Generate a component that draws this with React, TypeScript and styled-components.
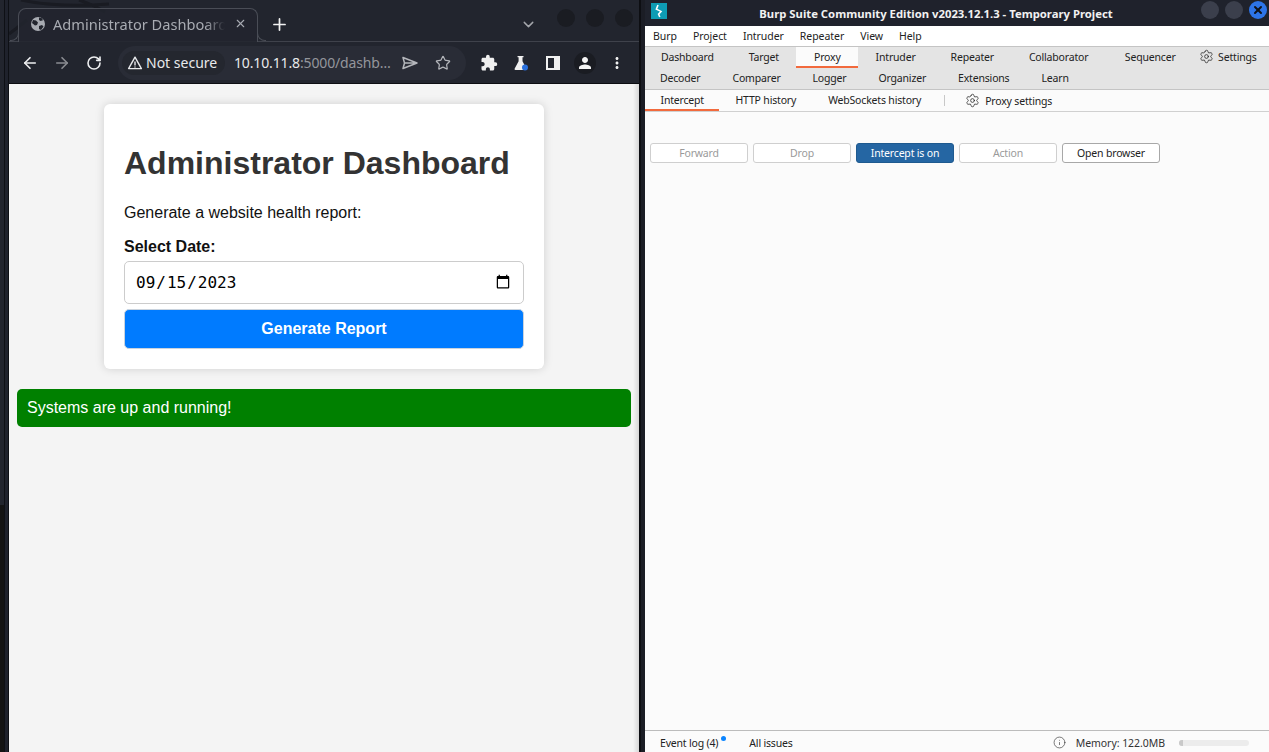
import React from "react";
import styled, { createGlobalStyle } from "styled-components";
import { ArrowLeft, ArrowRight, ChevronDown, Info, Plus, RotateCw, Settings, Star, X } from "lucide-react";
import { MdExtension, MdMoreVert, MdPerson } from "react-icons/md";

const Global = createGlobalStyle`
  html, body { margin: 0; padding: 0; background: #14161c; overflow: hidden; }
  #root { width: 1269px; height: 752px; }
  * { box-sizing: border-box; }
`;

const Desktop = styled.div`
  width: 1269px; height: 752px; display: flex; background: #14161c; overflow: hidden;
`;
const DesktopEdge = styled.div`
  width: 9px; flex: none;
  background:
    linear-gradient(to right, transparent 4px, #0e1015 4px, #0e1015 5px, #1f222c 5px, #1f222c 8px, #0e1015 8px),
    linear-gradient(to bottom, #22252e 505px, #141414 505px);
`;
const WindowGap = styled.div`
  width: 6px; flex: none; background: linear-gradient(to right, #0d0e12 2px, #1b1d25 2px);
`;
const BrowserWindow = styled.div`
  width: 630px; display: flex; flex-direction: column; flex: none;
  font-family: "Noto Sans", sans-serif;
`;
const TabStrip = styled.div`
  height: 41px; background: #22252e; display: flex; align-items: flex-end; padding-left: 9px; position: relative; flex: none;
`;
const Wallpaper = styled.svg`
  position: absolute; left: 0; top: 0; width: 120px; height: 41px;
`;
const Tab = styled.div`
  width: 240px; height: 34px; margin-bottom: -1px; border: 1px solid #4a4d56; border-bottom: none; border-radius: 8px 8px 0 0;
  background: rgba(34, 37, 46, 0.85); display: flex; align-items: center; padding: 0 10px 4px 11px; color: #a8abb2; font-size: 14.6px;
  position: relative; z-index: 1;
  &::after {
    content: ""; position: absolute; right: -9px; bottom: 1px; width: 8px; height: 8px;
    border-left: 1px solid #4a4d56; border-bottom: 1px solid #4a4d56; border-bottom-left-radius: 8px;
  }
  &::before {
    content: ""; position: absolute; left: -9px; bottom: 1px; width: 8px; height: 8px;
    border-right: 1px solid #4a4d56; border-bottom: 1px solid #4a4d56; border-bottom-right-radius: 8px;
  }
`;
const TabTitle = styled.span`
  flex: 1; margin-left: 7px; white-space: nowrap; overflow: hidden;
  mask-image: linear-gradient(to right, #000 84%, transparent 95%);
`;
const NewTab = styled.div`
  margin: 0 0 7px 12px; height: 20px; display: flex; align-items: center; color: #f2f2f2;
`;
const TabList = styled.div`
  margin: 0 0 7px 231px; display: flex; align-items: center; color: #a3a5aa; height: 20px;
`;
const ControlGroup = styled.div`
  display: flex; gap: 11px; position: absolute; right: 6px; top: 9px;
`;
const WinDot = styled.span<{ $bg: string }>`
  width: 18px; height: 18px; border-radius: 50%; background: ${(p) => p.$bg}; display: flex; align-items: center; justify-content: center;
  color: #10131a;
`;
const Toolbar = styled.div`
  height: 43px; background: #22252e; border-top: 1px solid #3f424b; border-bottom: 1px solid #0c0d11;
  display: flex; align-items: center; flex: none; position: relative;
`;
const NavIcon = styled.span<{ $dim?: boolean }>`
  width: 32px; display: flex; align-items: center; justify-content: center; color: ${(p) => (p.$dim ? "#8a8c92" : "#eeeff1")}; flex: none;
`;
const NavGroup = styled.div`
  display: flex; margin-left: 5px; flex: none;
`;
const Omnibox = styled.div`
  width: 348px; height: 34px; border-radius: 17px; background: #292c36; margin-left: 8px; display: flex; align-items: center; padding-left: 4px; flex: none;
`;
const SecurityChip = styled.div`
  width: 103px; height: 24px; border-radius: 12px; background: #24272f; display: flex; align-items: center; padding-left: 5px; gap: 3px;
  color: #e8e9eb; font-size: 14px; white-space: nowrap;
`;
const UrlText = styled.div`
  margin-left: 9px; font-size: 14px; letter-spacing: -0.14px; color: #e8e9eb; white-space: nowrap; width: 160px;
  span { color: #94969c; }
`;
const OmniIcon = styled.span<{ $ml: number }>`
  margin-left: ${(p) => p.$ml}px; display: flex; color: #b4b6bb;
`;
const ExtGroup = styled.div`
  display: flex; align-items: center; margin-left: 7px; flex: none;
`;
const ExtIcon = styled.span`
  width: 32px; display: flex; align-items: center; justify-content: center; color: #f0f0f0; flex: none;
`;
const Avatar = styled.span`
  width: 22px; height: 22px; margin: 0 5px; border-radius: 50%; background: #1a1c22; display: flex; align-items: center; justify-content: center; color: #f4f4f4; flex: none;
`;
const Page = styled.div`
  flex: 1; background: #f4f4f4; padding: 20px 8px 0; display: flex; flex-direction: column; align-items: center; position: relative;
  font-family: "Liberation Sans", Arial, sans-serif; color: #111;
  &::after {
    content: ""; position: absolute; right: 0; top: 0; bottom: 0; width: 6px;
    background: linear-gradient(to right, transparent, rgba(0, 0, 0, 0.12));
  }
`;
const Card = styled.div`
  width: 440px; height: 265px; background: #fff; border-radius: 6px; padding: 20px; box-shadow: 0 0 10px rgba(0, 0, 0, 0.15);
`;
const Heading = styled.h1`
  font-size: 32px; font-weight: 700; color: #333; margin: 21.44px 0; line-height: 37px;
`;
const Lead = styled.p`
  font-size: 16px; margin: 0 0 16px; line-height: 18px;
`;
const FieldLabel = styled.label`
  display: block; font-size: 16px; font-weight: 700; line-height: 18px; margin-bottom: 5px;
`;
const DateField = styled.input`
  display: block; width: 100%; height: 43px; padding: 10px; border: 1px solid #ccc; border-radius: 5px; background: #fff; color: #000;
  font-size: 16px; font-family: "DejaVu Sans Mono", monospace;
`;
const Submit = styled.button`
  display: block; width: 100%; height: 40px; margin-top: 5px; background: #007bff; color: #fff; border: 1px solid #c9d3de; border-radius: 5px;
  font: 700 16px "Liberation Sans", Arial, sans-serif;
`;
const Alert = styled.div`
  width: 614px; height: 38px; margin-top: 20px; background: #008000; color: #fff; border-radius: 5px; padding: 10px; font-size: 16px; line-height: 18px;
`;

const BurpWindow = styled.div`
  width: 624px; display: flex; flex-direction: column; flex: none; background: #fbfbfb;
  font-family: "Noto Sans", sans-serif; color: #222; font-size: 10.5px; letter-spacing: -0.18px;
`;
const TitleBar = styled.div`
  height: 26px; background: #1f222c; color: #f1f1f1; display: flex; align-items: center; position: relative; justify-content: center; flex: none;
  font-weight: 700; font-size: 11.3px; letter-spacing: 0; padding-right: 42px;
`;
const Logo = styled.span`
  position: absolute; left: 6px; top: 3px; width: 16px; height: 16px; background: #0e9cb4; display: flex; align-items: center; justify-content: center;
`;
const BurpControls = styled.div`
  position: absolute; right: 2px; top: 1px; display: flex; gap: 6px;
`;
const MenuBar = styled.div`
  height: 21px; background: #fff; border-bottom: 1px solid #c4c4c4; display: flex; align-items: center; padding-left: 8px; gap: 16px; flex: none;
  letter-spacing: -0.05px;
`;
const TabBlock = styled.div`
  background: #e4e4e4; border-bottom: 1px solid #c4c4c4; flex: none; height: 43px; overflow: hidden;
`;
const TabRow = styled.div<{ $shift: number }>`
  height: 21px; display: flex; margin-left: ${(p) => p.$shift}px;
`;
const MainTab = styled.div<{ $px: number; $mr?: number; $active?: boolean }>`
  padding: 0 ${(p) => p.$px}px; margin-right: ${(p) => p.$mr ?? 0}px; display: flex; align-items: center; gap: 4px; white-space: nowrap; height: 21px; flex: none;
  background: ${(p) => (p.$active ? "#fbfbfb" : "transparent")};
  border-bottom: 2px solid ${(p) => (p.$active ? "#f26a3d" : "transparent")};
`;
const SubTabs = styled.div`
  height: 22px; background: #fbfbfb; border-bottom: 1px solid #d0d0d0; display: flex; align-items: stretch; flex: none;
`;
const SubTab = styled.div<{ $active?: boolean; $px?: number }>`
  padding: 0 ${(p) => p.$px ?? 16}px; display: flex; align-items: center; white-space: nowrap;
  border-bottom: 2px solid ${(p) => (p.$active ? "#f26a3d" : "transparent")};
`;
const SubDivider = styled.div`
  width: 1px; height: 11px; background: #c8c8c8; margin: 5px 20px 0 7px;
`;
const SubSettings = styled.div`
  display: flex; align-items: center; gap: 5px;
`;
const Workspace = styled.div`
  flex: 1; padding: 31px 5px 0; display: flex; gap: 5px; align-items: flex-start;
`;
const ActionButton = styled.div<{ $kind?: "off" | "on" | "plain" }>`
  width: 98px; height: 20px; border-radius: 3px; display: flex; align-items: center; justify-content: center; flex: none;
  border: 1px solid ${(p) => (p.$kind === "on" ? "#1f5a8f" : p.$kind === "plain" ? "#a8a8a8" : "#cfcfcf")};
  background: ${(p) => (p.$kind === "on" ? "#2566a3" : "#fff")};
  color: ${(p) => (p.$kind === "on" ? "#fff" : p.$kind === "plain" ? "#222" : "#9a9a9a")};
`;
const StatusBar = styled.div`
  height: 22px; border-top: 1px solid #bcbcbc; background: #fbfbfb; display: flex; align-items: center; padding: 2px 20px 0 15px; flex: none;
`;
const EventLog = styled.span`
  position: relative; margin-right: 31px;
`;
const BlueDot = styled.i`
  position: absolute; right: -8px; top: 0; width: 5px; height: 5px; border-radius: 50%; background: #0a84ff;
`;
const StatusRight = styled.div`
  margin-left: auto; display: flex; align-items: center; gap: 10px; color: #333;
`;
const MemoryText = styled.span`
  letter-spacing: -0.05px;
`;
const MemoryBar = styled.div`
  width: 70px; height: 6px; border-radius: 3px; background: #ececec; margin-left: 4px; overflow: hidden;
  &::before { content: ""; display: block; width: 4px; height: 6px; background: #c9c9c9; }
`;

const Globe = () => (
  <svg width="16" height="16" viewBox="0 0 16 16">
    <circle cx="8" cy="8" r="7" fill="#a8abb2" />
    <path d="M3 4l3 .5 2 2-1 2.5-2 .5L2 7zM9 10l3-1 1.5 1.5L11 14l-2-1zM9 1.5l3 .8 1 2-2.5.7L9 4z" fill="#22252e" />
  </svg>
);
const Warn = () => (
  <svg width="16" height="16" viewBox="0 0 16 16" fill="none" stroke="#e8e9eb" strokeWidth="1.4">
    <path d="M8 2.2 14.4 13.6H1.6z" strokeLinejoin="round" />
    <path d="M8 6.4v4M8 11.4v1" />
  </svg>
);
const SendIcon = () => (
  <svg width="16" height="14" viewBox="0 0 16 14" fill="none" stroke="currentColor" strokeWidth="1.5">
    <path d="M1 1.5 15 7 1 12.5 2.5 7zM2.5 7H15" strokeLinejoin="round" />
  </svg>
);
const Flask = () => (
  <svg width="18" height="18" viewBox="0 0 18 18">
    <path d="M5.5 2h6v1.2h-1v4l4 7.6c.3.7-.1 1.2-.8 1.2H3.4c-.7 0-1.1-.5-.8-1.2l4-7.6v-4h-1z" fill="#f0f0f0" />
    <circle cx="13" cy="13.5" r="3" fill="#2a70dc" />
  </svg>
);
const SidePanel = () => (
  <svg width="14" height="14" viewBox="0 0 14 14">
    <path fillRule="evenodd" d="M0 0h14v14H0zM2 2v10h6V2z" fill="#f0f0f0" />
  </svg>
);
const Bolt = () => (
  <svg width="10" height="14" viewBox="0 0 10 14" fill="none" stroke="#fff" strokeWidth="1.6">
    <path d="M4 1 2.4 5.2 7 7.4 4.6 10.2 5.8 13" />
  </svg>
);

const row1: { label: string; active?: boolean; mr?: number }[] = [
  { label: "Dashboard" },
  { label: "Target" },
  { label: "Proxy", active: true },
  { label: "Intruder" },
  { label: "Repeater" },
  { label: "Collaborator", mr: 1.5 },
  { label: "Sequencer" },
];
const row2 = ["Decoder", "Comparer", "Logger", "Organizer", "Extensions", "Learn"];

export default function App() {
  return (
    <Desktop>
      <Global />
      <DesktopEdge />
      <BrowserWindow>
        <TabStrip>
          <Wallpaper viewBox="0 0 120 41" fill="none" stroke="#191b22" strokeWidth="3">
            <path d="M0 34 Q8 28 18 20M12 0 Q50 8 100 4M70 0 Q85 5 96 12" />
          </Wallpaper>
          <Tab>
            <Globe />
            <TabTitle>Administrator Dashboard</TabTitle>
            <X size={13} strokeWidth={2} />
          </Tab>
          <NewTab><Plus size={19} strokeWidth={2.2} /></NewTab>
          <TabList><ChevronDown size={17} /></TabList>
          <ControlGroup>
            <WinDot $bg="#1a1c22" /><WinDot $bg="#1a1c22" /><WinDot $bg="#1a1c22" />
          </ControlGroup>
        </TabStrip>
        <Toolbar>
          <NavGroup>
            <NavIcon><ArrowLeft size={18} strokeWidth={2.2} /></NavIcon>
            <NavIcon $dim><ArrowRight size={18} strokeWidth={2.2} /></NavIcon>
            <NavIcon><RotateCw size={16} strokeWidth={2.4} /></NavIcon>
          </NavGroup>
          <Omnibox>
            <SecurityChip><Warn />Not secure</SecurityChip>
            <UrlText>10.10.11.8<span>:5000/dashb…</span></UrlText>
            <OmniIcon $ml={8}><SendIcon /></OmniIcon>
            <OmniIcon $ml={17}><Star size={16} strokeWidth={1.8} /></OmniIcon>
          </Omnibox>
          <ExtGroup>
            <ExtIcon><MdExtension size={18} /></ExtIcon>
            <ExtIcon><Flask /></ExtIcon>
            <ExtIcon><SidePanel /></ExtIcon>
            <Avatar><MdPerson size={18} /></Avatar>
            <ExtIcon><MdMoreVert size={18} /></ExtIcon>
          </ExtGroup>
        </Toolbar>
        <Page>
          <Card>
            <Heading>Administrator Dashboard</Heading>
            <Lead>Generate a website health report:</Lead>
            <FieldLabel htmlFor="report-date">Select Date:</FieldLabel>
            <DateField id="report-date" type="date" defaultValue="2023-09-15" />
            <Submit type="button">Generate Report</Submit>
          </Card>
          <Alert>Systems are up and running!</Alert>
        </Page>
      </BrowserWindow>
      <WindowGap />
      <BurpWindow>
        <TitleBar>
          <Logo><Bolt /></Logo>
          Burp Suite Community Edition v2023.12.1.3 - Temporary Project
          <BurpControls>
            <WinDot $bg="#3b3f4c" /><WinDot $bg="#3b3f4c" />
            <WinDot $bg="#2d74e8"><X size={12} strokeWidth={4} /></WinDot>
          </BurpControls>
        </TitleBar>
        <MenuBar>
          {["Burp", "Project", "Intruder", "Repeater", "View", "Help"].map((m) => <span key={m}>{m}</span>)}
        </MenuBar>
        <TabBlock>
          <TabRow $shift={-1.5}>
            {row1.map((t) => <MainTab key={t.label} $px={17.5} $mr={t.mr} $active={t.active}>{t.label}</MainTab>)}
            <MainTab $px={6}><Settings size={15} strokeWidth={1.2} />Settings</MainTab>
          </TabRow>
          <TabRow $shift={-1}>
            {row2.map((t) => <MainTab key={t} $px={16}>{t}</MainTab>)}
          </TabRow>
        </TabBlock>
        <SubTabs>
          <SubTab $active $px={15.5}>Intercept</SubTab>
          <SubTab $px={16}>HTTP history</SubTab>
          <SubTab>WebSockets history</SubTab>
          <SubDivider />
          <SubSettings><Settings size={15} strokeWidth={1.2} />Proxy settings</SubSettings>
        </SubTabs>
        <Workspace>
          <ActionButton $kind="off">Forward</ActionButton>
          <ActionButton $kind="off">Drop</ActionButton>
          <ActionButton $kind="on">Intercept is on</ActionButton>
          <ActionButton $kind="off">Action</ActionButton>
          <ActionButton $kind="plain">Open browser</ActionButton>
        </Workspace>
        <StatusBar>
          <EventLog>Event log (4)<BlueDot /></EventLog>
          <span>All issues</span>
          <StatusRight>
            <Info size={13} strokeWidth={1.2} />
            <MemoryText>Memory: 122.0MB</MemoryText>
            <MemoryBar />
          </StatusRight>
        </StatusBar>
      </BurpWindow>
    </Desktop>
  );
}
